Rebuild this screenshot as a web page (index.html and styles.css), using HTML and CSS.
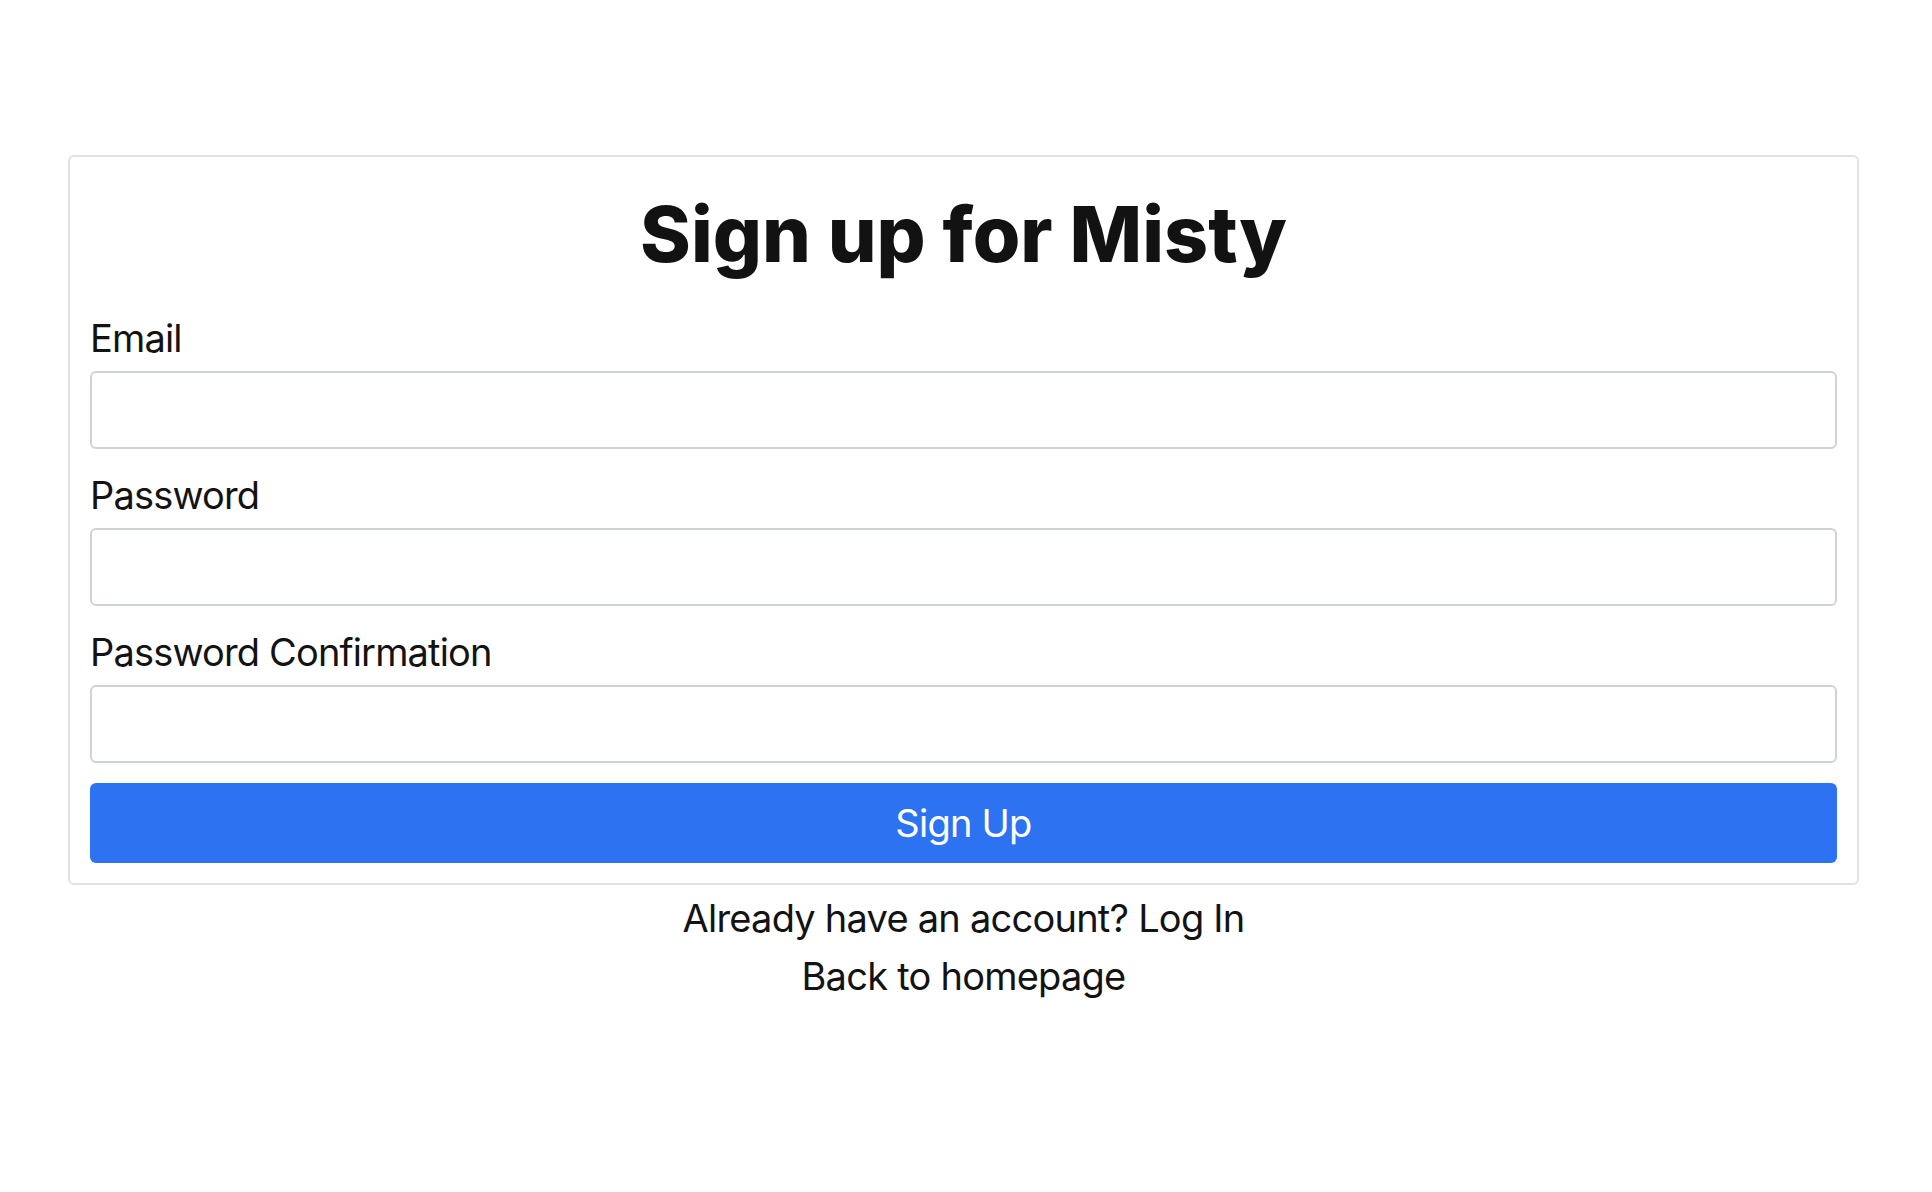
FILE: index.html
```html
<!DOCTYPE html>
<html lang="en">
<head>
<meta charset="utf-8">
<title>Sign up for Misty</title>
<link rel="stylesheet" href="styles.css">
</head>
<body>
<main class="page">
  <form class="card">
    <h1 class="title">Sign up for Misty</h1>
    <div class="field">
      <label class="label" for="email">Email</label>
      <input class="input" id="email" type="email">
    </div>
    <div class="field">
      <label class="label" for="password">Password</label>
      <input class="input" id="password" type="password">
    </div>
    <div class="field">
      <label class="label" for="confirm">Password Confirmation</label>
      <input class="input" id="confirm" type="password">
    </div>
    <button class="button" type="button">Sign Up</button>
  </form>
  <div class="links">
    <a class="link" href="#">Already have an account? Log In</a>
    <a class="link" href="#">Back to homepage</a>
  </div>
</main>
</body>
</html>
```

FILE: styles.css
```css
* { box-sizing: border-box; }
html, body { margin: 0; padding: 0; background: #ffffff; }
body {
  font-family: Inter, "Noto Sans", "Liberation Sans", sans-serif;
  color: #131313;
}
.page {
  padding: 155px 0 0 68px;
  width: 1859px;
}
.card {
  display: flex;
  flex-direction: column;
  border: 2px solid #e1e1e1;
  border-radius: 6px;
  padding: 0 20px 20px;
}
.title {
  margin: 31px 0 35px;
  font-size: 77px;
  line-height: 92px;
  font-weight: 800;
  letter-spacing: 0;
  text-align: center;
  color: #121212;
}
.field {
  display: flex;
  flex-direction: column;
  margin-bottom: 23px;
}
.field:last-of-type { margin-bottom: 20px; }
.label {
  font-size: 38px;
  line-height: 46px;
  letter-spacing: -0.022em;
  margin-bottom: 10px;
}
.input {
  height: 78px;
  border: 2px solid #ced3d8;
  border-radius: 6px;
  background: #fff;
  font: inherit;
}
.button {
  height: 80px;
  border: none;
  border-radius: 6px;
  background: #2d73f1;
  color: #ffffff;
  font-family: inherit;
  font-size: 38px;
  letter-spacing: -0.02em;
}
.links {
  margin-top: 4px;
  display: flex;
  flex-direction: column;
  align-items: center;
}
.link {
  font-size: 38px;
  line-height: 58px;
  letter-spacing: -0.02em;
  color: #131313;
  text-decoration: none;
}
```
